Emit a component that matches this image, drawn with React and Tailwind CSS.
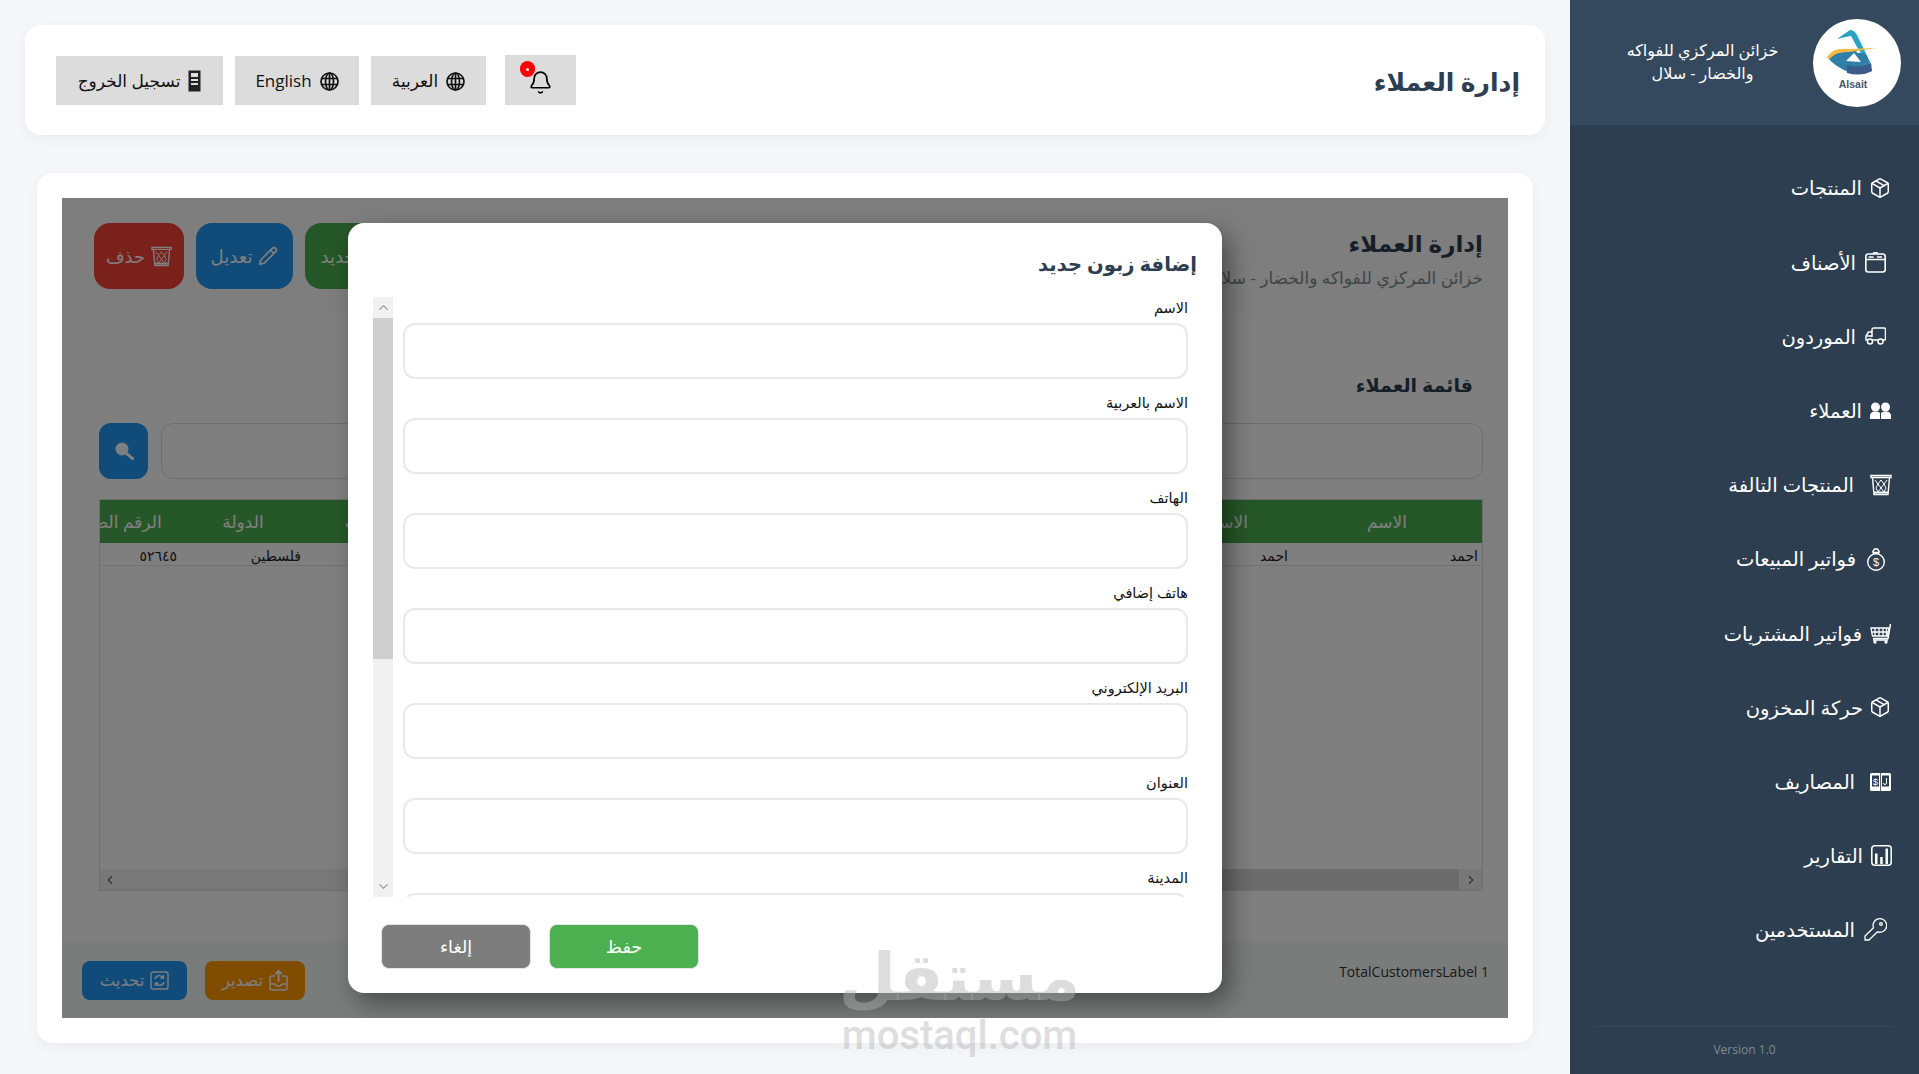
import React from 'react';
import { Package, Pencil, Plus, ChevronUp, ChevronDown, ChevronLeft, ChevronRight, Bell } from 'lucide-react';

const CategoryIcon = () => (
    <svg width="21" height="21" viewBox="0 0 21 21" fill="none" stroke="currentColor" strokeWidth="1.6">
        <rect x="0.8" y="2" width="19.4" height="18" rx="2.5" />
        <path d="M1 7.5h19M3.5 5h5M12 5h5M8 2l1-1.2h3l1 1.2" />
    </svg>
);
const TruckIcon = () => (
    <svg width="21" height="18" viewBox="0 0 21 18" fill="none" stroke="currentColor" strokeWidth="1.5">
        <path d="M7 10V3a2 2 0 0 1 2-2h10a1.500 1.500 0 0 1 1.500 1.500V12a1 1 0 0 1-1 1H1V9l2.500-4H7" />
        <path d="M2 9h5" />
        <circle cx="5" cy="14.500" r="2.500" fill="#2c3e50" />
        <circle cx="15.500" cy="14.500" r="2.500" fill="#2c3e50" />
    </svg>
);
const UsersIcon = () => (
    <svg width="21" height="17" viewBox="0 0 21 17" fill="currentColor">
        <circle cx="5.500" cy="5" r="4.500" />
        <circle cx="15.500" cy="5" r="4.500" />
        <path d="M0 17v-3.500C0 11 2.500 9.500 5.500 9.500c1.800 0 3.400.5 4.500 1.500v6zM11 17v-6c1.100-1 2.700-1.500 4.500-1.500 3 0 5.500 1.500 5.500 4V17z" />
    </svg>
);
const BasketIcon = ({ size = 22 }) => (
    <svg width={size} height={size} viewBox="0 0 22 22" fill="none" stroke="currentColor" strokeWidth="1.4">
        <path d="M1 1.500h20v2H1zM2.500 3.500 4 20.500h14l1.500-17" />
        <path d="M4 18.500h14" strokeWidth="2" />
        <path d="m5 6 3 4-2 4 2 4M11 6l-3 4 3 4-3 4M11 6l3 4-3 4 3 4M17 6l-3 4 2 4-2 4" strokeWidth="1" />
    </svg>
);
const MoneyBagIcon = () => (
    <svg width="20" height="23" viewBox="0 0 20 23" fill="none" stroke="currentColor" strokeWidth="1.4">
        <circle cx="10" cy="14" r="8.300" />
        <path d="M7.500 6 6.800 3.500 8.500 1h3l1.700 2.500L12.500 6M7.500 4.500h5" />
        <text x="10" y="18" textAnchor="middle" fontSize="11" fill="currentColor" stroke="none" fontFamily="Liberation Sans">$</text>
    </svg>
);
const CartIcon = () => (
    <svg width="21" height="21" viewBox="0 0 21 21" fill="none" stroke="currentColor" strokeWidth="1.3">
        <path d="M20.500 1 18 15.500H3" strokeWidth="1.500" />
        <path d="M1 5h18l-1.500 8H2.500zM1 9h17.500M5 5v8M9 5v8M13 5v8M16.500 5v8" />
        <path d="M3 17h15" strokeWidth="1.600" />
        <circle cx="5" cy="19" r="1" fill="currentColor" />
        <circle cx="16" cy="19" r="1" fill="currentColor" />
    </svg>
);
const ExpenseIcon = () => (
    <svg width="21" height="18" viewBox="0 0 21 18">
        <rect width="21" height="18" rx="1.500" fill="currentColor" />
        <rect x="2" y="2.500" width="7" height="11" fill="#2c3e50" />
        <rect x="12" y="2.500" width="7" height="11" fill="#2c3e50" />
        <text x="5.500" y="11.500" textAnchor="middle" fontSize="9.500" fill="currentColor" fontFamily="Liberation Sans">$</text>
        <path d="M16.500 5v5a1.500 1.500 0 0 1-3 0" stroke="currentColor" fill="none" />
        <path d="M10.500 0v18" stroke="#2c3e50" strokeWidth="0.800" />
    </svg>
);
const ReportIcon = () => (
    <svg width="21" height="21" viewBox="0 0 21 21" fill="none" stroke="currentColor" strokeWidth="1.5">
        <rect x="0.800" y="0.800" width="19.400" height="19.400" rx="3" />
        <path d="M4 19V8.500h2.500V19zM9.200 19v-7h2.500v7zM14.500 19V3.500H17V19z" fill="currentColor" stroke="none" />
    </svg>
);
const KeyIcon = () => (
    <svg width="23" height="23" viewBox="0 0 23 23" fill="none" stroke="currentColor" strokeWidth="1.300" strokeLinejoin="round">
        <path d="M9.500 9.800a6.800 6.800 0 1 1 4 4L5 22H1v-4z" />
        <circle cx="17" cy="6" r="1.300" />
    </svg>
);
const GlobeIcon = () => (
    <svg width="19" height="19" viewBox="0 0 19 19" fill="none" stroke="#111" strokeWidth="1.700">
        <circle cx="9.500" cy="9.500" r="8.500" />
        <ellipse cx="9.500" cy="9.500" rx="4" ry="8.500" />
        <path d="M9.500 1v17M1.500 6.500h16M1.500 12.500h16" />
    </svg>
);
const DoorIcon = () => (
    <svg width="13" height="22" viewBox="0 0 13 22">
        <rect x="0.500" y="0.500" width="12" height="21" fill="#222" />
        <path d="M3 3h7v4H3zM3 9h7v2H3zM3 13h7v2H3z" fill="#ddd" />
    </svg>
);
const RefreshIcon = () => (
    <svg width="19" height="19" viewBox="0 0 19 19" fill="none" stroke="currentColor" strokeWidth="1.400">
        <rect x="1" y="1" width="17" height="17" rx="2" />
        <path d="M5 8a4.500 4.500 0 0 1 8-1.500M14 11a4.500 4.500 0 0 1-8 1.500M13.500 4v3h-3M5.500 15v-3h3" />
    </svg>
);
const ExportIcon = () => (
    <svg width="19" height="21" viewBox="0 0 19 21" fill="none" stroke="currentColor" strokeWidth="1.500">
        <path d="M6 6H3a2 2 0 0 0-2 2v10a2 2 0 0 0 2 2h13a2 2 0 0 0 2-2V8a2 2 0 0 0-2-2h-3" />
        <path d="M2 14h4l2 2h3l2-2h4" />
        <path d="M9.500 12V1M6.500 4l3-3 3 3" strokeWidth="2" />
    </svg>
);
const SearchIcon = () => (
    <svg width="20" height="20" viewBox="0 0 20 20">
        <circle cx="8" cy="8" r="6.500" fill="currentColor" />
        <path d="m12.500 12.500 6 5" stroke="currentColor" strokeWidth="3" strokeLinecap="round" />
    </svg>
);
const Logo = () => (
    <svg width="88" height="88" viewBox="0 0 88 88" className="shrink-0">
        <circle cx="44" cy="44" r="44" fill="#fff" />
        <path d="M24 20 37 11 q5 0 8 7 L59 47 Q50 38 44 28 L38 17 q-6 1-14 3z" fill="#2aa3c7" />
        <path d="M15 39 Q22 32 34 33 L43 31 44 34 Q52 33 54 37 L59 52 Q50 56 38 54 Q22 48 15 39z" fill="#2f7fa8" />
        <path d="M34 54 Q48 58 59 52 L58 44 Q48 50 34 46z" fill="#3b5b8c" />
        <path d="M33 42 L41 34 L48 43z" fill="#fff" />
        <path d="M14 38 Q20 28 36 30 L64 29 L36 33 Q22 32 16 41z" fill="#f5b942" />
        <text x="40" y="69" textAnchor="middle" fontSize="10.500" fontWeight="700" fill="#4a5568" fontFamily="Liberation Sans">Alsait</text>
    </svg>
);

const menu = [
    { label: 'المنتجات', icon: <Package size={22} strokeWidth={1.6} />, cls: 'pr-[28px] gap-[7px]' },
    { label: 'الأصناف', icon: <CategoryIcon />, cls: 'pr-[33px] gap-[9px]' },
    { label: 'الموردون', icon: <TruckIcon />, cls: 'pr-[33px] gap-[9px]' },
    { label: 'العملاء', icon: <UsersIcon />, cls: 'pr-[28px] gap-[8px]' },
    { label: 'المنتجات التالفة', icon: <BasketIcon />, cls: 'pr-[27px] gap-[16px]' },
    { label: 'فواتير المبيعات', icon: <MoneyBagIcon />, cls: 'pr-[33px] gap-[10px]' },
    { label: 'فواتير المشتريات', icon: <CartIcon />, cls: 'pr-[28px] gap-[8px]' },
    { label: 'حركة المخزون', icon: <Package size={22} strokeWidth={1.6} />, cls: 'pr-[28px] gap-[6px]' },
    { label: 'المصاريف', icon: <ExpenseIcon />, cls: 'pr-[28px] gap-[15px]' },
    { label: 'التقارير', icon: <ReportIcon />, cls: 'pr-[27px] gap-[8px]' },
    { label: 'المستخدمين', icon: <KeyIcon />, cls: 'pr-[32px] gap-[9px]' },
];

const columns = [
    { label: 'الاسم', w: 'w-[190px]', cell: 'احمد' },
    { label: 'الاسم بالعربية', w: 'w-[184px]', cell: 'احمد' },
    { label: 'الهاتف', w: 'w-[160px]', cell: '' },
    { label: 'هاتف إضافي', w: 'w-[160px]', cell: '' },
    { label: 'البريد الإلكتروني', w: 'w-[176px]', cell: '' },
    { label: 'العنوان', w: 'w-[180px]', cell: '' },
    { label: 'المدينة', w: 'w-[127px]', cell: '' },
    { label: 'الدولة', w: 'w-[124px]', cell: 'فلسطين' },
    { label: 'الرقم الضريبي', w: 'w-[140px]', cell: '٥٢٦٤٥' },
];

const fields = ['الاسم', 'الاسم بالعربية', 'الهاتف', 'هاتف إضافي', 'البريد الإلكتروني', 'العنوان', 'المدينة', 'الدولة'];

function Sidebar() {
    return (
        <aside className="w-[349px] shrink-0 h-full bg-[#2c3e50] text-white flex flex-col">
            <div className="h-[125px] bg-[#34495e] flex items-center pr-[18px]">
                <Logo />
                <div className="flex-1 text-center text-[16px] leading-[23px] font-medium pl-[22px] pb-[2px]">
                    خزائن المركزي للفواكه
                    <br />
                    والخضار - سلال
                </div>
            </div>
            <nav className="flex-1 pt-[26px]">
                {menu.map((item) => (
                    <div key={item.label} className={`h-[74.2px] flex items-center text-[19.5px] font-medium ${item.cls}`}>
                        {item.icon}
                        <span>{item.label}</span>
                    </div>
                ))}
            </nav>
            <div className="h-[48px] mx-[25px] pb-[2px] border-t border-[#34495e] flex items-center justify-center text-xs text-[#7f8c8d]">
                Version 1.0
            </div>
        </aside>
    );
}

function TopBar() {
    return (
        <header className="h-[110px] bg-white rounded-2xl shadow-[0_4px_15px_rgba(0,0,0,0.05)] flex items-center justify-between pr-[25px] pl-[31px]">
            <h1 className="text-[25px] font-semibold text-[#2c3e50] pt-[3px]">إدارة العملاء</h1>
            <div className="flex items-center text-[17px] text-[#111]">
                <button className="relative w-[71px] h-[50px] bg-[#dcdcdc] flex items-center justify-center ml-[19px]">
                    <Bell size={25} strokeWidth={1.6} className="text-black mt-[5px]" />
                    <span className="absolute top-[6px] right-[41px] w-[15px] h-[16px] rounded-full bg-[#ff0000] flex items-center justify-center">
                        <span className="w-[3px] h-[3px] rounded-full bg-white" />
                    </span>
                </button>
                <button className="w-[115px] h-[49px] pt-[2px] bg-[#dcdcdc] flex items-center justify-center gap-2 ml-[12px]">
                    <GlobeIcon />
                    العربية
                </button>
                <button className="w-[124px] h-[49px] pt-[2px] bg-[#dcdcdc] flex items-center justify-center gap-2 ml-[12px]">
                    <GlobeIcon />
                    English
                </button>
                <button className="w-[167px] h-[49px] pt-[2px] bg-[#dcdcdc] flex items-center justify-center gap-2">
                    <DoorIcon />
                    تسجيل الخروج
                </button>
            </div>
        </header>
    );
}

function CustomersTable() {
    return (
        <div className="h-[392px] border border-[#ddd] flex flex-col overflow-hidden">
            <div className="h-[43px] bg-[#4caf50] flex shrink-0 text-white text-[17px] font-medium">
                {columns.map((c) => (
                    <div key={c.label} className={`${c.w} shrink-0 flex items-center justify-center whitespace-nowrap`}>
                        {c.label}
                    </div>
                ))}
            </div>
            <div className="h-[23px] border-b border-[#e5e5e5] flex shrink-0 text-[14px] text-[#222]">
                {columns.map((c) => (
                    <div key={c.label} className={`${c.w} shrink-0 flex items-center pr-[4px] pt-[2px]`}>
                        {c.cell}
                    </div>
                ))}
            </div>
            <div className="flex-1" />
            <div className="h-[21px] bg-[#f1f1f1] flex shrink-0 items-center text-[#666]">
                <div className="w-[23px] flex justify-center">
                    <ChevronRight size={14} />
                </div>
                <div className="w-[1000px] h-full bg-[#d8d8d8]" />
                <div className="flex-1 flex justify-end pl-[3px]">
                    <ChevronLeft size={14} />
                </div>
            </div>
        </div>
    );
}

function CustomerModal() {
    return (
        <div className="absolute inset-0 bg-black/50 flex items-center justify-center">
            <div className="w-[874px] h-[770px] bg-white rounded-2xl shadow-[8px_10px_25px_rgba(0,0,0,0.4)] px-[25px] flex flex-col">
                <h2 className="h-[74px] shrink-0 pt-[23px] text-[19.5px] leading-[36px] font-semibold text-[#2c3e50]">إضافة زبون جديد</h2>
                <div className="h-[600px] shrink-0 flex overflow-hidden">
                    <div className="flex-1 pr-[9px] pl-[10px]">
                        {fields.map((f) => (
                            <div key={f} className="h-[95px] shrink-0">
                                <label className="block h-[22px] mb-[4px] text-[14.5px] leading-[22px] font-medium text-[#111]">{f}</label>
                                <input className="block w-full h-[56px] bg-white border-2 border-[#e9e9ec] rounded-xl" />
                            </div>
                        ))}
                    </div>
                    <div className="w-[20px] shrink-0 bg-[#f1f1f3] flex flex-col text-[#999]">
                        <div className="h-[21px] flex items-center justify-center">
                            <ChevronUp size={15} />
                        </div>
                        <div className="h-[341px] bg-[#cdcfcf]" />
                        <div className="flex-1" />
                        <div className="h-[21px] flex items-center justify-center">
                            <ChevronDown size={15} />
                        </div>
                    </div>
                </div>
                <div className="flex justify-end gap-[18px] mt-[27px] pl-[8px] text-white text-[17.5px]">
                    <button className="w-[150px] h-[45px] bg-[#4caf50] rounded-lg border border-[#e5e5e5]">حفظ</button>
                    <button className="w-[150px] h-[45px] bg-[#7d7d7d] rounded-lg border border-[#e5e5e5]">إلغاء</button>
                </div>
            </div>
        </div>
    );
}

function CustomersPanel() {
    return (
        <div className="relative h-[820px] bg-white flex flex-col overflow-hidden">
            <div className="h-[117px] shrink-0 bg-[#fafcfb] rounded-b-2xl flex justify-between pr-[25px] pl-[32px] pt-[25px]">
                <div>
                    <h1 className="text-[23px] leading-[40px] font-bold text-[#2c3e50]">إدارة العملاء</h1>
                    <p className="text-[17px] leading-[24px] mt-[3px] text-[#7f8c8d]">خزائن المركزي للفواكه والخضار - سلال</p>
                </div>
                <div className="flex gap-[12px] text-white text-[18px]">
                    <button className="w-[92px] h-[66px] bg-[#4caf50] rounded-2xl flex items-center justify-center gap-[6px]">
                        <Plus size={20} />
                        جديد
                    </button>
                    <button className="w-[97px] h-[66px] bg-[#2196f3] rounded-2xl flex items-center justify-center gap-[6px]">
                        <Pencil size={20} />
                        تعديل
                    </button>
                    <button className="w-[90px] h-[66px] bg-[#f44336] rounded-2xl flex items-center justify-center gap-[6px]">
                        <BasketIcon size={21} />
                        حذف
                    </button>
                </div>
            </div>
            <div className="pr-[25px] pl-[37px] pt-[50px] min-w-0">
                <h2 className="h-[40px] pr-[10px] text-[19px] leading-[40px] font-semibold text-[#2c3e50]">قائمة العملاء</h2>
                <div className="mt-[18px] h-[56px] flex gap-[13px]">
                    <input className="flex-1 min-w-0 h-full bg-white border border-[#ddd] rounded-xl" />
                    <button className="w-[49px] shrink-0 h-full bg-[#2196f3] rounded-xl flex items-center justify-center text-white">
                        <SearchIcon />
                    </button>
                </div>
                <div className="mt-[20px]">
                    <CustomersTable />
                </div>
            </div>
            <div className="mt-[51px] h-[76px] shrink-0 bg-[#f5f7f6] flex items-start justify-between pr-[19px] pl-[20px] pt-[19px]">
                <span className="text-[14px] leading-[22px] text-[#333]" dir="ltr">TotalCustomersLabel 1</span>
                <div className="flex gap-[18px] text-white text-[16.5px]">
                    <button className="w-[100px] h-[39px] bg-[#ff9800] rounded-lg flex items-center justify-center gap-[6px]">
                        <ExportIcon />
                        تصدير
                    </button>
                    <button className="w-[105px] h-[39px] bg-[#2196f3] rounded-lg flex items-center justify-center gap-[6px]">
                        <RefreshIcon />
                        تحديث
                    </button>
                </div>
            </div>
            <CustomerModal />
        </div>
    );
}

export default function App() {
    return (
        <div dir="rtl" className="relative w-full h-screen overflow-hidden flex bg-[#f5f7fb] font-['Open_Sans','DejaVu_Sans',sans-serif]">
            <Sidebar />
            <main className="flex-1 min-w-0 px-[25px] pt-[25px]">
                <TopBar />
                <section className="mt-[38px] mx-[12px] h-[870px] bg-white rounded-2xl shadow-[0_4px_15px_rgba(0,0,0,0.05)] px-[25px] pt-[25px]">
                    <CustomersPanel />
                </section>
            </main>
            {/* site watermark over the screenshot */}
            <div className="absolute left-[845px] top-[932px] w-[229px] flex flex-col items-center text-[#b4b4b4]/45 pointer-events-none">
                <span className="text-[66px] leading-[84px] font-bold whitespace-nowrap">مستقل</span>
                <span className="text-[40px] leading-[40px] font-medium font-['Roboto',sans-serif]" dir="ltr">mostaql.com</span>
            </div>
        </div>
    );
}
